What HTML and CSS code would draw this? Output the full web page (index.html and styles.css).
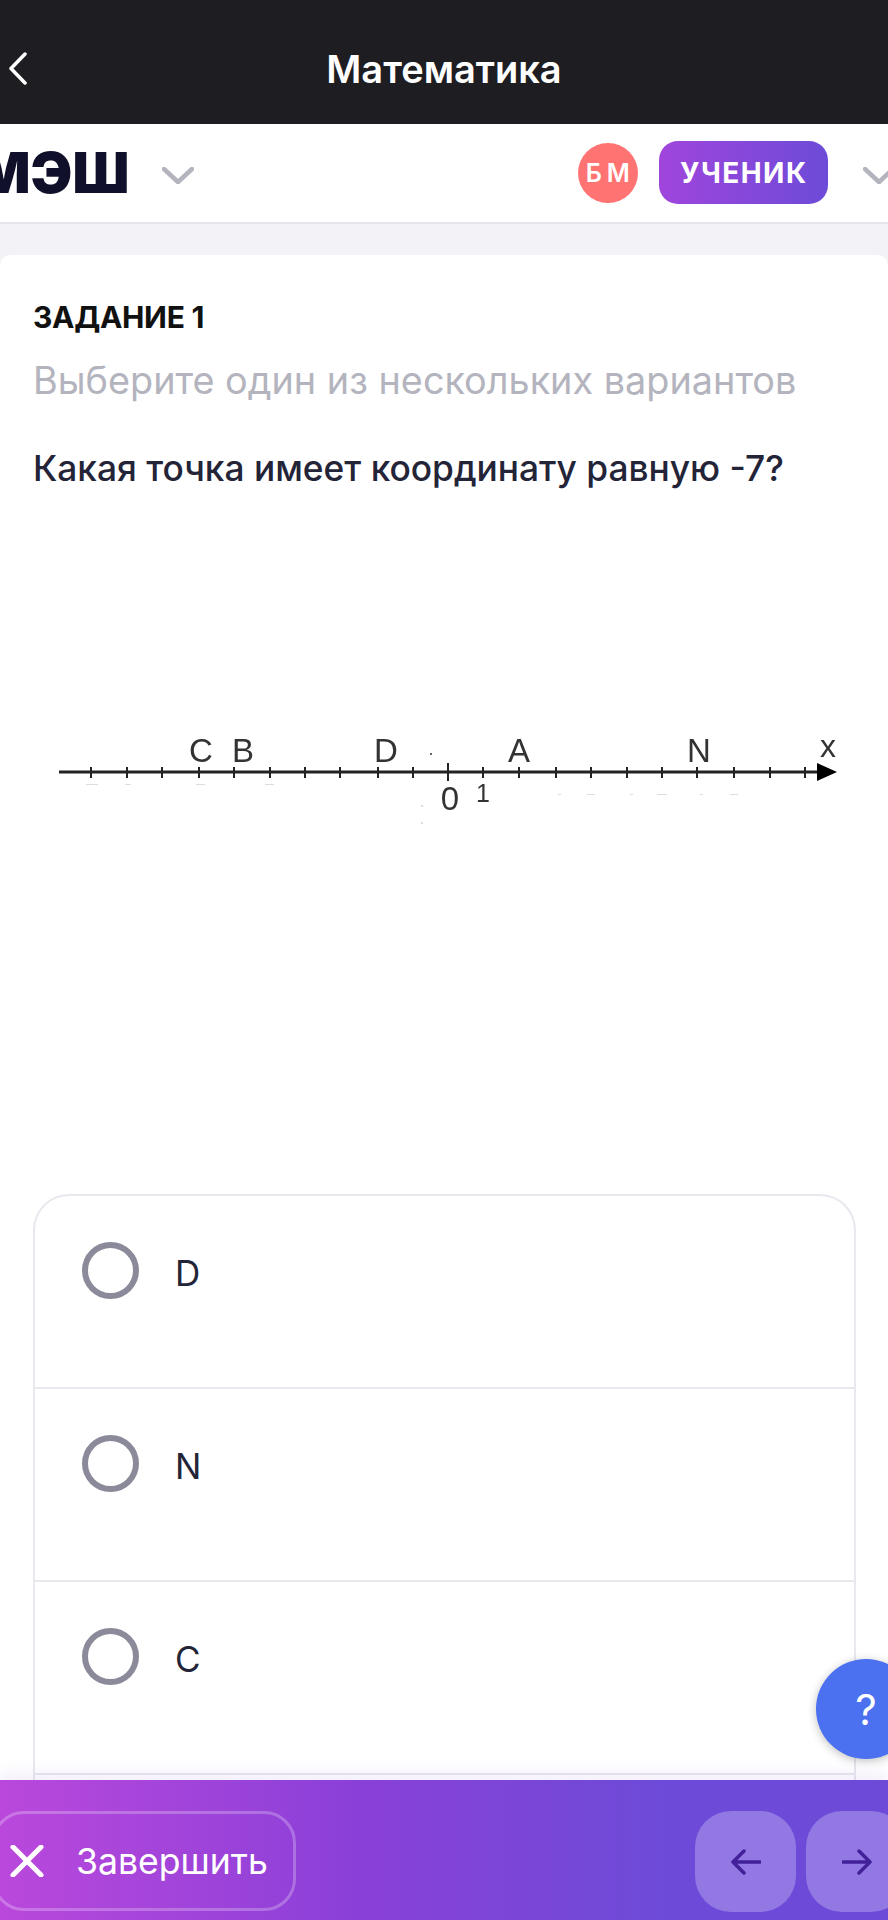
FILE: index.html
```html
<!DOCTYPE html>
<html lang="ru">
<head>
    <meta charset="UTF-8">
    <meta name="viewport" content="width=device-width, initial-scale=1.0">
    <title>Математика</title>
    <link rel="stylesheet" href="styles.css">
</head>
<body>
    <div class="page">
        <header class="topbar">
            <svg class="back-icon" viewBox="0 0 19 33"><path d="M17 2 3 16.5 17 31"/></svg>
            <h1 class="topbar-title">Математика</h1>
        </header>

        <nav class="navbar">
            <span class="logo">МЭШ</span>
            <svg class="chevron chevron-logo" viewBox="0 0 32 17"><path d="M2 2 16 15 30 2"/></svg>
            <span class="avatar">БМ</span>
            <span class="role">УЧЕНИК</span>
            <svg class="chevron chevron-role" viewBox="0 0 32 17"><path d="M2 2 16 15 30 2"/></svg>
        </nav>

        <main class="card">
            <h2 class="task-number">ЗАДАНИЕ 1</h2>
            <p class="task-hint">Выберите один из нескольких вариантов</p>
            <p class="task-question">Какая точка имеет координату равную -7?</p>

            <svg class="number-line" viewBox="0 0 888 290">
                <g class="axis">
                    <path d="M59 231H820"/>
                    <path class="ticks" d="M91 226v11M127 226v11M162 226v11M199 226v11M234 226v11M270 226v11M305 226v11M340 226v11M378 226v11M413 226v11M483 226v11M519 226v11M556 226v11M591 226v11M627 226v11M662 226v11M697 226v11M734 226v11M770 226v11M805 226v11"/>
                    <path class="ticks" d="M448 222v18"/>
                    <polygon points="817,222 837,231 817,240"/>
                </g>
                <g class="faint">
                    <rect x="86" y="243" width="12" height="1"/><rect x="125" y="243" width="6" height="1"/>
                    <rect x="196" y="243" width="9" height="1"/><rect x="265" y="243" width="9" height="1"/>
                    <rect x="558" y="253" width="3" height="1"/><rect x="587" y="253" width="8" height="1"/>
                    <rect x="630" y="253" width="3" height="1"/><rect x="657" y="253" width="10" height="1"/>
                    <rect x="700" y="253" width="3" height="1"/><rect x="730" y="253" width="8" height="1"/>
                    <rect x="421" y="264" width="2" height="2"/><rect x="421" y="281" width="2" height="2"/>
                </g>
                <circle cx="431" cy="213" r="1" fill="#333"/>
                <g class="axis-labels">
                    <text x="201" y="221">C</text>
                    <text x="243" y="221">B</text>
                    <text x="386" y="221">D</text>
                    <text x="519" y="221">A</text>
                    <text x="699" y="221">N</text>
                    <text class="axis-x" x="828" y="216">x</text>
                    <text class="axis-zero" x="450" y="269">0</text>
                    <text class="axis-one" x="483" y="261">1</text>
                </g>
            </svg>

            <div class="options">
                <div class="option"><span class="radio"></span><span class="option-label">D</span></div>
                <div class="option"><span class="radio"></span><span class="option-label">N</span></div>
                <div class="option"><span class="radio"></span><span class="option-label">C</span></div>
                <div class="option"></div>
            </div>
        </main>

        <button class="help">?</button>

        <footer class="bottombar">
            <div class="finish">
                <svg class="finish-icon" viewBox="0 0 34 32"><path d="M3 2 31 30M31 2 3 30"/></svg>
                <span>Завершить</span>
            </div>
            <div class="arrows">
                <div class="arrow-btn">
                    <svg viewBox="0 0 30 26"><path d="M29 13H2M13 2 2 13 13 24"/></svg>
                </div>
                <div class="arrow-btn">
                    <svg viewBox="0 0 30 26"><path d="M1 13H28M17 2 28 13 17 24"/></svg>
                </div>
            </div>
        </footer>
    </div>
</body>
</html>
```

FILE: styles.css
```css
:root {
    --text: #242438;
    --line: #e8e8ee;
    --gradient: linear-gradient(90deg, #a045dc, #6d4bd8);
}

* {
    box-sizing: border-box;
}

body {
    margin: 0;
    font-family: Inter, "Liberation Sans", sans-serif;
    color: var(--text);
    background-color: #f2f2f7;
}

.page {
    position: relative;
    width: 888px;
    height: 1920px;
    overflow: hidden;
    display: flex;
    flex-direction: column;
}

/* top bar */

.topbar {
    flex: none;
    height: 124px;
    background-color: #1e1e22;
    padding-top: 52px;
    display: flex;
    justify-content: center;
}

.back-icon {
    position: absolute;
    left: 8px;
    top: 52px;
    width: 19px;
    height: 33px;
    fill: none;
    stroke: #fff;
    stroke-width: 3.5;
    stroke-linecap: round;
    stroke-linejoin: round;
}

.topbar-title {
    margin: 0;
    font-size: 38px;
    line-height: 34px;
    font-weight: 600;
    color: #fff;
}

/* nav */

.navbar {
    flex: none;
    height: 100px;
    background-color: #fff;
    border-bottom: 2px solid #e4e4ea;
    display: flex;
    align-items: center;
}

.logo {
    margin-left: -23px;
    font-size: 56px;
    line-height: 56px;
    font-weight: 900;
    color: #10102a;
    filter: blur(0.6px);
}

.chevron {
    width: 32px;
    height: 17px;
    fill: none;
    stroke: #b4b4be;
    stroke-width: 4.5;
    stroke-linecap: round;
    stroke-linejoin: round;
    flex: none;
}

.chevron-logo {
    margin: 4px 384px 0 33px;
}

.avatar {
    flex: none;
    width: 60px;
    height: 60px;
    border-radius: 50%;
    background-color: #ff7373;
    color: #fff;
    font-size: 25px;
    font-weight: 600;
    letter-spacing: 5px;
    padding-left: 4px;
    display: flex;
    align-items: center;
    justify-content: center;
    margin-top: -1px;
}

.role {
    flex: none;
    width: 169px;
    height: 63px;
    margin: -1px 35px 0 21px;
    border-radius: 19px;
    background: var(--gradient);
    color: #fff;
    font-size: 28px;
    font-weight: 700;
    letter-spacing: 1.5px;
    display: flex;
    align-items: center;
    justify-content: center;
}

.chevron-role {
    margin-top: 4px;
}

/* task card */

.card {
    flex: none;
    height: 1665px;
    margin-top: 31px;
    padding: 0 33px;
    background-color: #fff;
    border-radius: 10px 10px 0 0;
}

.task-number {
    margin: 44px 0 0;
    font-size: 30px;
    line-height: 36px;
    font-weight: 700;
    color: #111;
    letter-spacing: -0.3px;
}

.task-hint {
    margin: 23px 0 0;
    font-size: 37.8px;
    line-height: 44px;
    color: #b4b4be;
}

.task-question {
    margin: 45px 0 0;
    font-size: 35.3px;
    line-height: 44px;
    font-weight: 500;
}

.number-line {
    display: block;
    width: 888px;
    height: 290px;
    margin: 50px 0 0 -33px;
    filter: blur(0.5px);
}

.axis path {
    fill: none;
    stroke: #222;
    stroke-width: 3;
}

.axis .ticks {
    stroke-width: 2;
}

.faint rect {
    fill: #ddd;
}

.axis-labels text {
    font-family: "Liberation Sans", sans-serif;
    font-size: 33px;
    fill: #333;
    text-anchor: middle;
}

.axis-labels .axis-x {
    font-size: 32px;
}

.axis-labels .axis-one {
    font-size: 25px;
}

.options {
    margin-top: 363px;
    width: 823px;
    border: 2px solid var(--line);
    border-radius: 36px 36px 0 0;
    border-bottom: 0;
}

.option {
    height: 193px;
    padding: 46px 0 0 47px;
    display: flex;
    align-items: flex-start;
    border-bottom: 2px solid var(--line);
}

.radio {
    flex: none;
    width: 57px;
    height: 57px;
    border: 6px solid #8a8a9a;
    border-radius: 50%;
    margin-right: 36px;
}

.option-label {
    font-size: 35px;
    line-height: 41px;
    margin-top: 11px;
}

/* floating help */

.help {
    position: absolute;
    left: 816px;
    top: 1659px;
    width: 100px;
    height: 100px;
    padding: 0;
    border: 0;
    border-radius: 50%;
    background-color: #4b70f0;
    box-shadow: 0 2px 10px rgba(0, 0, 0, 0.25);
    color: #fff;
    font-family: Inter, sans-serif;
    font-size: 42px;
}

/* bottom bar */

.bottombar {
    position: absolute;
    left: 0;
    right: 0;
    top: 1780px;
    height: 140px;
    background: linear-gradient(90deg, #ba48dc, #8a40d8 40%, #6d4bd8 75%);
    box-shadow: 0 -8px 14px rgba(120, 60, 200, 0.08);
    display: flex;
    justify-content: space-between;
    padding-top: 31px;
}

.finish {
    width: 304px;
    height: 100px;
    margin-left: -8px;
    padding-left: 15px;
    border: 3px solid rgba(255, 255, 255, 0.25);
    border-radius: 32px;
    display: flex;
    align-items: center;
    gap: 32px;
    color: #fff;
    font-size: 35.6px;
}

.finish-icon {
    flex: none;
    width: 34px;
    height: 32px;
    fill: none;
    stroke: #fff;
    stroke-width: 5;
    stroke-linecap: round;
}

.arrows {
    display: flex;
    gap: 10px;
    margin-right: -19px;
}

.arrow-btn {
    width: 101px;
    height: 101px;
    border-radius: 36px;
    background-color: rgba(255, 255, 255, 0.25);
    display: flex;
    align-items: center;
    justify-content: center;
}

.arrow-btn svg {
    width: 30px;
    height: 26px;
    fill: none;
    stroke: #42209a;
    stroke-width: 3.5;
    stroke-linecap: round;
    stroke-linejoin: round;
}
```
